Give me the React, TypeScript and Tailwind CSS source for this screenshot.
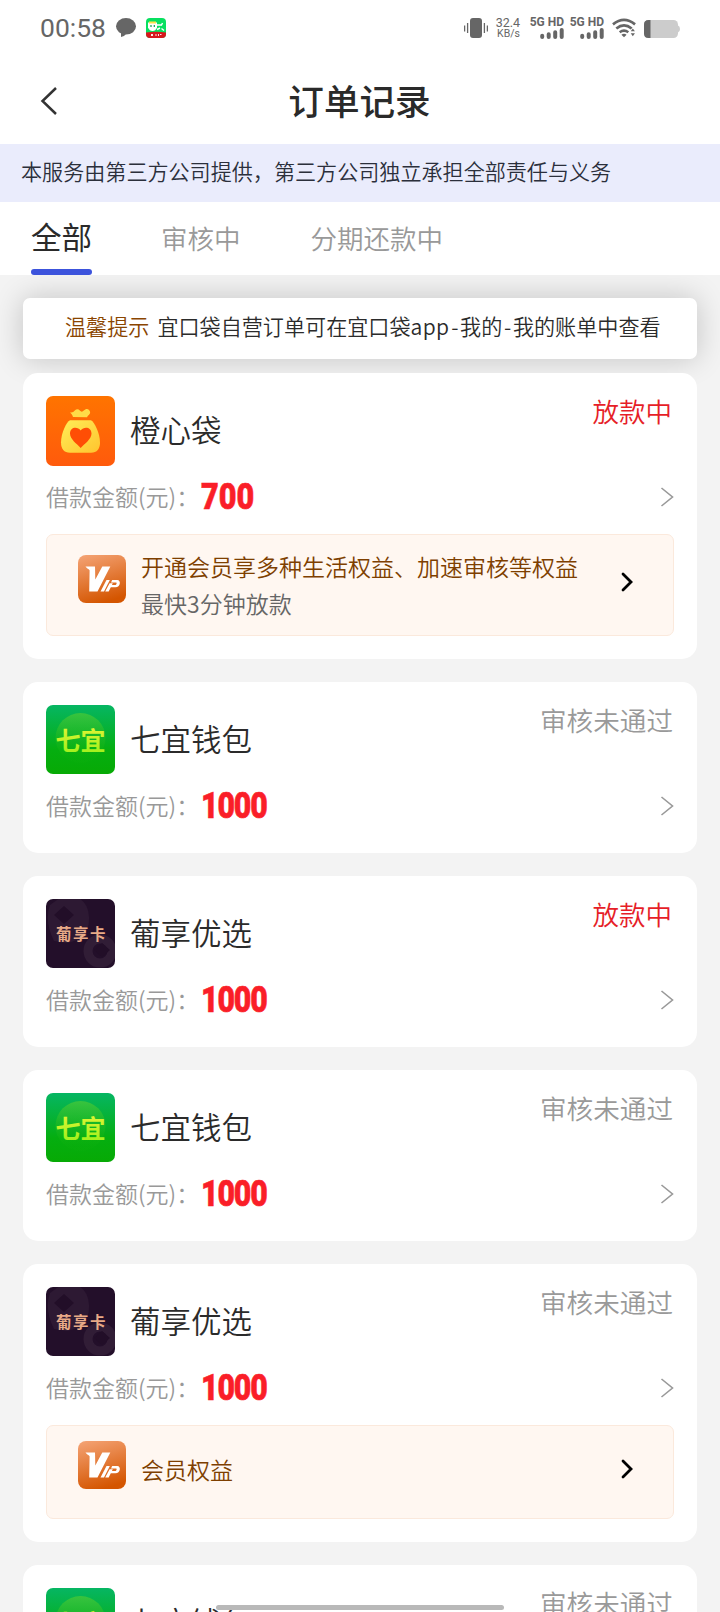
import React from "react";

type Order = {
  logo: "bag" | "qiyi" | "pu";
  name: string;
  amount: string;
  passed: boolean;
  benefit?: { title: string; note?: string };
};

const orders: Order[] = [
  {
    logo: "bag",
    name: "橙心袋",
    amount: "700",
    passed: true,
    benefit: { title: "开通会员享多种生活权益、加速审核等权益", note: "最快3分钟放款" },
  },
  { logo: "qiyi", name: "七宜钱包", amount: "1000", passed: false },
  { logo: "pu", name: "葡享优选", amount: "1000", passed: true },
  { logo: "qiyi", name: "七宜钱包", amount: "1000", passed: false },
  { logo: "pu", name: "葡享优选", amount: "1000", passed: false, benefit: { title: "会员权益" } },
  { logo: "qiyi", name: "七宜钱包", amount: "1000", passed: false },
];

function BagLogo() {
  return (
    <svg viewBox="0 0 69 70" className="h-[70px] w-[69px] shrink-0 rounded-[7px]">
      <defs>
        <linearGradient id="bagBg" x1="0" y1="0" x2="0" y2="1">
          <stop offset="0" stopColor="#ff7400" />
          <stop offset="1" stopColor="#ff5a0c" />
        </linearGradient>
        <linearGradient id="bagFill" x1="0" y1="0" x2="1" y2="1">
          <stop offset="0" stopColor="#ffee58" />
          <stop offset="1" stopColor="#ffc42e" />
        </linearGradient>
      </defs>
      <rect width="69" height="70" fill="url(#bagBg)" />
      <path d="M27 21c-.5-2-1.500-3-3-4.500 2.500.3 3.500-.3 4.800-1.900 1.500-1.800 3.600-1.900 5-.1 1.200 1.500 2.700 1.500 4 .1 1.600-1.800 3.800-2.100 5.200-.7 1.500 1.700 1.500 3.300.2 4.600-1 1-1.700 1.500-2.100 2.700z" fill="#ffdc48" />
      <path d="M24 24.200h21c3.200 1.600 9 13 9 22.300 0 6.500-3 10.300-9 10.300H24c-6 0-9-3.800-9-10.300 0-9.300 5.500-20.700 9-22.300z" fill="url(#bagFill)" />
      <path d="M34.700 52C30.500 47.500 24 43 24 37.500c0-6.500 7.500-7.500 10.700-3 3.200-4.500 10.800-3.500 10.800 3 0 5.500-6.600 10-10.800 14.500z" fill="#ff4e05" />
    </svg>
  );
}

function QiyiLogo() {
  return (
    <svg viewBox="0 0 69 69" className="h-[69px] w-[69px] shrink-0 rounded-[7px]">
      <defs>
        <linearGradient id="qyBg" x1="0" y1="0" x2="0" y2="1">
          <stop offset="0" stopColor="#06b663" />
          <stop offset=".65" stopColor="#05ae10" />
          <stop offset="1" stopColor="#07aa05" />
        </linearGradient>
        <linearGradient id="qyDisc" x1="0" y1="0" x2="0" y2="1">
          <stop offset="0" stopColor="#4fca35" stopOpacity=".7" />
          <stop offset=".9" stopColor="#18b410" stopOpacity=".1" />
        </linearGradient>
        <linearGradient id="qyText" x1="0" y1="0" x2="0" y2="1">
          <stop offset="0" stopColor="#f0f53a" />
          <stop offset="1" stopColor="#96f019" />
        </linearGradient>
      </defs>
      <rect width="69" height="69" fill="url(#qyBg)" />
      <circle cx="34.500" cy="33" r="25" fill="url(#qyDisc)" />
      <text x="34.500" y="45" textAnchor="middle" fontSize="25" fontWeight="700" fill="url(#qyText)" className="font-['Noto_Sans_CJK_SC',sans-serif]">
        七宜
      </text>
    </svg>
  );
}

function PuLogo() {
  return (
    <svg viewBox="0 0 69 69" className="h-[69px] w-[69px] shrink-0 rounded-[7px]">
      <rect width="69" height="69" fill="#230f2a" />
      <path d="M4 6 18 -4q24 0 25 22t-22 26L8 42Q-2 22 4 6z" fill="#2d1933" />
      <circle cx="54" cy="52" r="12" strokeWidth="9" fill="none" stroke="#311d36" />
      <path d="m18 7 10 9-10 9-10-9zM56 44l8 7-8 7-8-7z" fill="#220e28" />
      <text x="35.500" y="40.500" textAnchor="middle" fontSize="15.500" letterSpacing="1.500" fontWeight="700" fill="#e8aa87" className="font-['Noto_Sans_CJK_SC',sans-serif]">
        葡享卡
      </text>
    </svg>
  );
}

function VipLogo() {
  return (
    <svg viewBox="0 0 48 48" className="h-12 w-12 shrink-0 rounded-[8px]">
      <defs>
        <linearGradient id="vipBg" x1=".2" y1="0" x2=".5" y2="1">
          <stop offset="0" stopColor="#f3a070" />
          <stop offset="1" stopColor="#d45500" />
        </linearGradient>
      </defs>
      <rect width="48" height="48" fill="url(#vipBg)" />
      <path d="M7.500 11.500h9.500l.3 13 7-13h8L19.500 36.500h-8.300l.4-21c0-1.300-2.500-1.500-4.100-4z" fill="#fff" />
      <path d="M28.500 25h3.300L26 36.500h-3.500z" fill="#fff" />
      <path d="M34.200 25h5c4.200 0 3.300 7.300-1.700 7.300h-4.700l-2.100 4.200h-3.500l4.400-8.200h3.200l-.9 1.700h3.200c1.400 0 2.200-2.600.8-2.600h-4.900z" fill="#fff" />
    </svg>
  );
}

function StatusBar() {
  return (
    <div className="flex h-[56px] items-center justify-between pr-[40px] pl-[40px] text-[#666]">
      <div className="flex items-center">
        <span className="w-[66px] font-['Roboto',sans-serif] text-[26.500px] leading-[56px] font-normal whitespace-nowrap">00:58</span>
        <svg viewBox="0 0 20 20" className="ml-[10px] h-5 w-5">
          <ellipse cx="10" cy="8.300" rx="10" ry="8.300" fill="#666" />
          <path d="M5 14v5q4-1 6-4z" fill="#666" />
        </svg>
        <svg viewBox="0 0 20 20" className="ml-[10px] h-5 w-5 rounded-[4px]">
          <rect width="20" height="20" fill="#08e060" />
          <path d="M0 14.500q10-1.500 20 0V20H0z" fill="#d8161c" />
          <path d="M2 4.500h9v5q-1.500 3.500-4.500 3.500T2 9.500z" fill="#fff" />
          <path d="M3 3.500h7v2H3z" fill="#ffe14a" />
          <path d="M5 7v2M8.300 7v2" stroke="#08a050" strokeWidth="1.200" />
          <path d="M11 7h4.500l1-2M11 11.500l3-1.500M15.500 10.500l2.500 2" stroke="#fff" strokeWidth="1.400" fill="none" />
          <path d="m5 16 2 2m0-2-2 2M9 17h2M12.500 16v2M14 16.500h1.500" stroke="#fff" strokeWidth=".9" fill="none" />
        </svg>
      </div>
      <div className="flex items-center">
        <svg viewBox="0 0 24 20" className="h-5 w-6">
          <rect x="6" width="12" height="20" rx="3" fill="#666" />
          <path d="M.6 7.500v6M3.600 5v10M23.400 7.500v6M20.400 5v10" stroke="#666" strokeWidth="1.300" />
        </svg>
        <div className="ml-2 flex w-6 flex-col items-end font-['Roboto',sans-serif]">
          <span className="h-[11px] text-[12.500px] leading-[11px]">32.4</span>
          <span className="h-[11px] text-[10.500px] leading-[11px]">KB/s</span>
        </div>
        <SignalBlock className="ml-3" />
        <SignalBlock className="ml-2" />
        <svg viewBox="0 0 25 20" className="ml-2 h-5 w-6">
          <path d="M1 6.200Q12.500-3 24 6.200" fill="none" stroke="#666" strokeWidth="2.800" />
          <path d="M4.500 10.500q8-6.500 16 0" fill="none" stroke="#666" strokeWidth="2.800" />
          <path d="M8 14.500q4.500-3.500 9 0" fill="none" stroke="#666" strokeWidth="2.600" />
          <path d="M9.800 17q2.700-2 5.400 0l-2.700 2.700z" fill="#666" />
          <path d="m19.500 13.500 2.200-3 2.200 3zM19.500 15.500h4.400l-2.200 3z" fill="#666" />
        </svg>
        <svg viewBox="0 0 36 18" className="mt-[2px] ml-2 h-[18px] w-9">
          <rect width="34" height="18" rx="4.500" fill="#ccc" />
          <path d="M34 5.500q2 .5 2 3.500t-2 3.500z" fill="#ccc" />
          <path d="M4.500 0H6.500v18H4.500Q0 18 0 13.500v-9Q0 0 4.500 0z" fill="#666" />
        </svg>
      </div>
    </div>
  );
}

function SignalBlock({ className }: { className: string }) {
  return (
    <div className={`${className} flex w-8 flex-col items-end`}>
      <span className="font-['Roboto',sans-serif] text-[12px] leading-[11px] font-bold whitespace-nowrap">5G HD</span>
      <svg viewBox="0 0 24 11" className="h-[11px] w-6">
        <path d="M2.200 7.800v1.200M8.700 6.200v2.800M15.200 4.200v4.800M21.700 2v7" stroke="#666" strokeWidth="4" strokeLinecap="round" />
      </svg>
    </div>
  );
}

function OrderCard({ order }: { order: Order }) {
  return (
    <section className="w-[674px] shrink-0 rounded-[15px] bg-white px-[23px] pt-[23px] pb-[23px]">
      <div className="flex h-[70px] items-start">
        {order.logo === "bag" ? <BagLogo /> : order.logo === "qiyi" ? <QiyiLogo /> : <PuLogo />}
        <h2 className="ml-[15px] flex-1 text-[30.500px] leading-[66px] font-[350] text-[#2b2b2b]">{order.name}</h2>
        {order.passed ? (
          <span className="pr-[2px] text-[26.500px] leading-[30px] font-[350] text-[#e61e28]">放款中</span>
        ) : (
          <span className="pr-[1px] text-[26.600px] leading-[30px] font-[350] text-[#999]">审核未通过</span>
        )}
      </div>
      <div className="flex h-[45px] items-start pt-[17px]">
        <span className="w-[155px] text-[23px] leading-[26px] font-[350] whitespace-nowrap text-[#999]">借款金额(元)：</span>
        <span
          className={
            order.amount.length > 3
              ? "flex-1 origin-left scale-x-[0.83] font-['Roboto',sans-serif] text-[36.500px] leading-[27px] font-black tracking-[-1.400px] text-[#fa1e28] [-webkit-text-stroke:0.6px_#fa1e28]"
              : "flex-1 origin-left scale-x-[0.84] font-['Roboto',sans-serif] text-[36.500px] leading-[27px] font-black text-[#fa1e28] [-webkit-text-stroke:0.6px_#fa1e28]"
          }
        >
          {order.amount}
        </span>
        <svg viewBox="0 0 14 20" className="mt-[4px] h-5 w-[14px]">
          <path d="m1.500 1 11 9-11 9" fill="none" stroke="#999" strokeWidth="1.600" />
        </svg>
      </div>
      {order.benefit ? (
        <div
          className={
            order.benefit.note
              ? "mt-[23px] flex h-[102px] rounded-[7px] border border-[#fbe9dc] bg-[#fff7f1] pt-[20px] pr-[40px] pl-[31px]"
              : "mt-[23px] flex h-[94px] rounded-[7px] border border-[#fbe9dc] bg-[#fff7f1] pt-[15px] pr-[40px] pl-[31px]"
          }
        >
          <VipLogo />
          <div className={order.benefit.note ? "-mt-[7px] ml-[15px] flex-1" : "mt-[10px] ml-[15px] flex-1"}>
            <p className="text-[23px] leading-[37px] font-[350] whitespace-nowrap text-[#7e3f00]">{order.benefit.title}</p>
            {order.benefit.note && (
              <p className="text-[23px] leading-[37px] font-[350] text-[#666]">{order.benefit.note}</p>
            )}
          </div>
          <svg viewBox="0 0 12 20" className={order.benefit.note ? "mt-[17px] h-5 w-3" : "mt-[18px] h-5 w-3"}>
            <path d="m2 2 8 8-8 8" fill="none" stroke="#000" strokeWidth="2.800" strokeLinecap="round" />
          </svg>
        </div>
      ) : (
        <div className="h-[10px]" />
      )}
    </section>
  );
}

export default function App() {
  return (
    <div className="relative flex h-[1612px] w-[720px] flex-col overflow-hidden bg-[#f3f3f3] font-['Noto_Sans_CJK_SC',sans-serif]">
      <header className="h-[144px] shrink-0 bg-white">
        <StatusBar />
        <div className="flex h-[88px] items-center pl-[40px]">
          <svg viewBox="0 0 18 28" className="mt-px h-7 w-[18px]">
            <path d="M16 1 2.500 14 16 27" fill="none" stroke="#333" strokeWidth="2.500" />
          </svg>
          <h1 className="flex-1 pr-[59px] text-center text-[35.600px] leading-[88px] font-medium text-[#2a2a2a]">订单记录</h1>
        </div>
      </header>
      <p className="h-[58px] shrink-0 bg-[#eaecfc] pl-[21px] text-[21.090px] leading-[54px] font-[350] whitespace-nowrap text-[#2b2f3b]">
        本服务由第三方公司提供，第三方公司独立承担全部责任与义务
      </p>
      <nav className="flex h-[73px] shrink-0 bg-white pl-[31px]">
        <div className="flex w-[61px] flex-col">
          <span className="h-[67px] text-[30.500px] leading-[69px] font-normal text-[#2a2a2a]">全部</span>
          <span className="h-[6px] w-[61px] rounded-full bg-[#3c53dc]" />
        </div>
        <span className="ml-[69px] text-[26.500px] leading-[72px] font-[350] text-[#999]">审核中</span>
        <span className="ml-[70px] text-[26.500px] leading-[72px] font-[350] text-[#999]">分期还款中</span>
      </nav>
      <main className="flex flex-1 flex-col items-center overflow-hidden pt-[23px]">
        <div className="flex h-[61px] w-[674px] shrink-0 rounded-[7px] bg-white pl-[42px] text-[21.100px] leading-[56px] font-[350] whitespace-nowrap text-[#2b2b2b] shadow-[0_0_30px_rgba(0,0,0,0.2)]">
          <span className="text-[#8a4500]">温馨提示</span>
          <span className="ml-[8px]">
            宜口袋自营订单可在宜口袋
            <span className="tracking-[0.4px]">app</span>
            <span className="mx-[1.700px]">-</span>我的<span className="mx-[1.700px]">-</span>我的账单中查看
          </span>
        </div>
        <div className="z-10 mt-[14px] flex flex-col gap-[23px]">
          {orders.map((order, index) => (
            <OrderCard key={index} order={order} />
          ))}
        </div>
      </main>
      <div className="absolute bottom-[2px] left-[216px] z-20 h-[5px] w-[288px] rounded-full bg-[#b9b9b9]" />
    </div>
  );
}
